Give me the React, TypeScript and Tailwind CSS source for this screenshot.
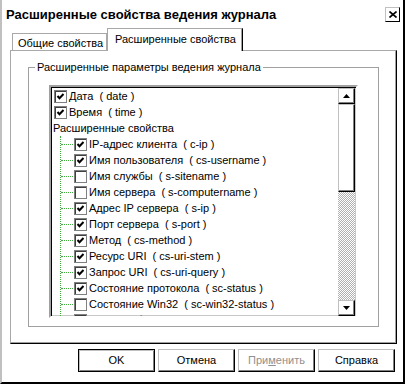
import React from "react";

type Item = { label: string; checked: boolean };

const topItems: Item[] = [
  { label: "Дата  ( date )", checked: true },
  { label: "Время  ( time )", checked: true },
];

const extItems: Item[] = [
  { label: "IP-адрес клиента  ( c-ip )", checked: true },
  { label: "Имя пользователя  ( cs-username )", checked: true },
  { label: "Имя службы  ( s-sitename )", checked: false },
  { label: "Имя сервера  ( s-computername )", checked: false },
  { label: "Адрес IP сервера  ( s-ip )", checked: true },
  { label: "Порт сервера  ( s-port )", checked: true },
  { label: "Метод  ( cs-method )", checked: true },
  { label: "Ресурс URI  ( cs-uri-stem )", checked: true },
  { label: "Запрос URI  ( cs-uri-query )", checked: true },
  { label: "Состояние протокола  ( sc-status )", checked: true },
  { label: "Состояние Win32  ( sc-win32-status )", checked: false },
  { label: "Послано байт  ( sc-bytes )", checked: false },
];

function CheckBox({ checked }: { checked: boolean }) {
  return (
    <span className="flex h-[13px] w-[13px] shrink-0 items-center justify-center border border-[#808080] bg-white shadow-[inset_1px_1px_0_#404040]">
      {checked && (
        <svg width="9" height="9" viewBox="0 0 9 9">
          <polyline points="1.5,4 3.5,6.2 7.5,2" fill="none" stroke="#000" strokeWidth="2" />
        </svg>
      )}
    </span>
  );
}

function Arrow({ up }: { up: boolean }) {
  return (
    <div className="flex h-[16px] w-full items-center justify-center border border-t-[#c0c0c0] border-l-[#c0c0c0] border-r-black border-b-black bg-white shadow-[inset_-1px_-1px_0_#808080]">
      <svg width="7" height="4" viewBox="0 0 7 4">
        <polygon points={up ? "3.5,0 7,4 0,4" : "0,0 7,0 3.5,4"} fill="#000" />
      </svg>
    </div>
  );
}

function Button({
  children,
  primary,
}: {
  children: React.ReactNode;
  primary?: boolean;
}) {
  return (
    <div
      className={
        primary
          ? "flex h-[23px] w-[77px] items-center justify-center border border-black bg-white shadow-[inset_1px_1px_0_#c0c0c0,inset_-1px_-1px_0_#808080]"
          : "flex h-[23px] w-[77px] items-center justify-center border border-t-[#c0c0c0] border-l-[#c0c0c0] border-r-black border-b-black bg-white shadow-[inset_-1px_-1px_0_#808080]"
      }
    >
      {children}
    </div>
  );
}

export default function App() {
  return (
    <div className="h-[384px] w-[405px] bg-white font-['Liberation_Sans',Arial,sans-serif] text-[11px] text-black">
      <div className="flex h-[384px] flex-col border-b-2 border-l-2 border-r-2 border-b-black border-l-[#c0c0c0] border-r-black">
        {/* title */}
        <div className="flex h-[28px] items-center justify-between pl-[4px] pr-[3px]">
          <span className="text-[13px] font-bold leading-none">Расширенные свойства ведения журнала</span>
          <div className="flex h-[15px] w-[15px] items-center justify-center border border-t-[#c0c0c0] border-l-[#c0c0c0] border-r-black border-b-black">
            <svg width="8" height="7" viewBox="0 0 8 7">
              <path d="M0.5 0.5 L7.5 6.5 M7.5 0.5 L0.5 6.5" stroke="#000" strokeWidth="1.6" />
            </svg>
          </div>
        </div>

        {/* tabs */}
        <div className="ml-[8px] mr-[6px]">
          <div className="flex h-[22px] items-end pl-[2px]">
            <div className="flex h-[17px] w-[95px] items-center whitespace-nowrap border-l border-r border-t border-[#a8a8a8] pl-[5px] pt-[2px]">
              Общие свойства
            </div>
            <div className="relative z-10 mb-[-1px] flex h-[23px] w-[136px] items-center whitespace-nowrap border-l border-r border-t border-l-[#a8a8a8] border-r-black border-t-[#a8a8a8] bg-white pb-[2px] pl-[7px] shadow-[inset_-1px_0_0_#a0a0a0]">
              Расширенные свойства
            </div>
          </div>

          {/* panel */}
          <div className="flex h-[294px] flex-col border border-b-black border-l-[#a8a8a8] border-r-black border-t-[#a8a8a8] shadow-[inset_-1px_-1px_0_#a0a0a0]">
            <fieldset className="mx-[17px] mt-[10px] h-[266px] border border-[#a0a0a0]">
              <legend className="ml-[6px] px-[2px] leading-[13px]">Расширенные параметры ведения журнала</legend>
              <div className="mx-[20px] mt-[11px] flex h-[233px] border-2 border-b-white border-l-[#a0a0a0] border-r-white border-t-[#a0a0a0] shadow-[inset_1px_1px_0_#000,inset_-1px_-1px_0_#c8c8c8]">
                <div className="flex-1 overflow-hidden pt-[1px]">
                  {topItems.map((it) => (
                    <div key={it.label} className="flex h-[16px] items-center gap-[2px] pl-[3px]">
                      <CheckBox checked={it.checked} />
                      <span className="whitespace-pre">{it.label}</span>
                    </div>
                  ))}
                  <div className="flex h-[16px] items-center pl-[2px]">Расширенные свойства</div>
                  <div className="ml-[9px] border-l border-dotted border-[#3fae3f]">
                    {extItems.map((it) => (
                      <div key={it.label} className="flex h-[16px] items-center">
                        <span className="w-[12px] border-t border-dotted border-[#3fae3f]" />
                        <span className="ml-[1px]">
                          <CheckBox checked={it.checked} />
                        </span>
                        <span className="ml-[2px] whitespace-pre">{it.label}</span>
                      </div>
                    ))}
                  </div>
                </div>
                <div className="mr-[1px] mt-[1px] flex w-[17px] flex-col">
                  <Arrow up />
                  <div className="h-[88px] border border-t-[#c0c0c0] border-l-[#c0c0c0] border-r-black border-b-black bg-white shadow-[inset_-1px_-1px_0_#808080]" />
                  <div className="flex-1 bg-[image:repeating-conic-gradient(#b0b0b0_0%_25%,#ffffff_0%_50%)] bg-[length:2px_2px]" />
                  <Arrow up={false} />
                </div>
              </div>
            </fieldset>
          </div>
        </div>

        {/* buttons */}
        <div className="mt-[5px] flex gap-[3px] pl-[76px]">
          <Button primary>OK</Button>
          <Button>Отмена</Button>
          <Button>
            <span className="text-[#909090]">
              При<span className="underline">м</span>енить
            </span>
          </Button>
          <Button>Справка</Button>
        </div>
      </div>
    </div>
  );
}
